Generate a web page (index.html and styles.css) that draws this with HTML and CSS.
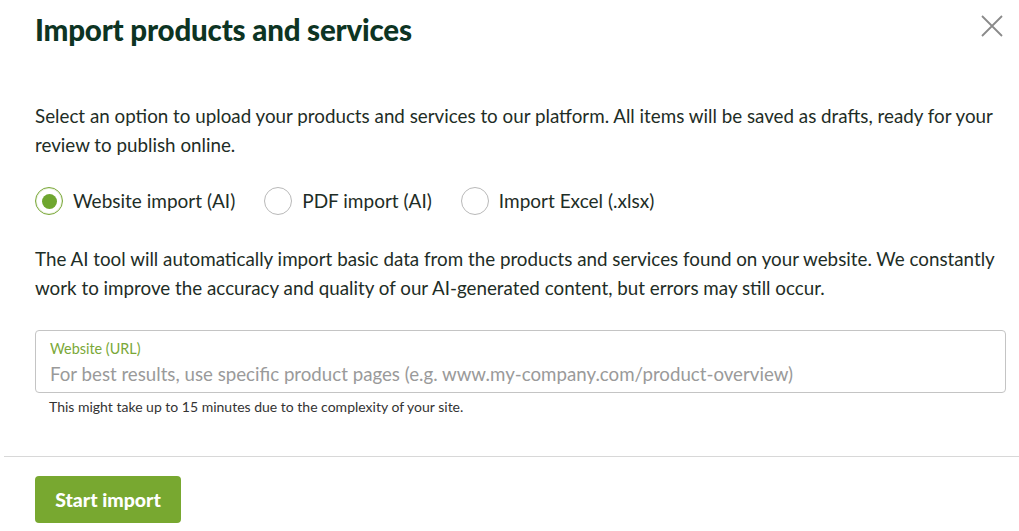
FILE: index.html
```html
<!DOCTYPE html>
<html>
<head>
<meta charset="utf-8">
<link rel="stylesheet" href="styles.css">
</head>
<body>
<div class="modal">
  <header class="modal-head">
    <h1 class="title">Import products and services</h1>
    <button class="close" aria-label="Close">
      <svg width="24" height="24" viewBox="0 0 24 24"><path d="M2 2L22 22M22 2L2 22" stroke="#8a8a8a" stroke-width="1.8" fill="none"/></svg>
    </button>
  </header>
  <div class="modal-body">
    <p class="text">Select an option to upload your products and services to our platform. All items will be saved as drafts, ready for your review to publish online.</p>
    <div class="radios">
      <label class="radio"><span class="dot checked"></span>Website import (AI)</label>
      <label class="radio"><span class="dot"></span>PDF import (AI)</label>
      <label class="radio"><span class="dot"></span>Import Excel (.xlsx)</label>
    </div>
    <p class="text">The AI tool will automatically import basic data from the products and services found on your website. We constantly work to improve the accuracy and quality of our AI-generated content, but errors may still occur.</p>
    <div class="field">
      <div class="field-label">Website (URL)</div>
      <div class="field-input">For best results, use specific product pages (e.g. www.my-company.com/product-overview)</div>
    </div>
    <div class="hint">This might take up to 15 minutes due to the complexity of your site.</div>
  </div>
  <footer class="modal-foot">
    <button class="btn">Start import</button>
  </footer>
</div>
</body>
</html>
```
FILE: styles.css
```css
html, body { margin: 0; padding: 0; background: #fff; }
body { font-family: Lato, "Open Sans", sans-serif; color: #1e2d26; }
.modal { width: 1019px; }
.modal-head { display: flex; justify-content: space-between; align-items: flex-start; padding: 12px 15px 0 35px; }
.title { margin: 0; font-size: 29.5px; font-weight: 900; color: #0d3423; line-height: 36px; letter-spacing: -0.2px; }
.close { border: 0; background: none; padding: 0; margin-top: 2px; width: 24px; height: 24px; cursor: pointer; }
.modal-body { padding: 53px 13px 0 35px; }
.text { margin: 0; font-size: 18.8px; line-height: 29px; }
.radios { display: flex; gap: 29px; margin: 28px 0 29px; align-items: center; }
.radio { display: flex; align-items: center; gap: 10px; font-size: 19px; line-height: 28px; }
.dot { width: 28px; height: 28px; border: 1px solid #b9b9b9; border-radius: 50%; box-sizing: border-box; position: relative; }
.dot.checked { border-color: #7aa838; box-shadow: inset 0 0 0 1px #e8f0dc; }
.dot.checked::after { content: ""; position: absolute; left: 5.5px; top: 5.5px; width: 15px; height: 15px; border-radius: 50%; background: #6ea62f; }
.field { margin-top: 28px; border: 1px solid #c4c4c4; border-radius: 4px; padding: 9px 14px 8px; height: 63px; box-sizing: border-box; }
.field-label { font-size: 14.4px; color: #7aa838; line-height: 18px; }
.field-input { font-size: 18.7px; color: #9a9a9a; line-height: 28px; margin-top: 2px; }
.hint { font-size: 14px; color: #333; margin: 5px 0 0 14px; line-height: 18px; }
.modal-foot { border-top: 1px solid #d8d8d8; margin: 40px 0 0 4px; padding: 19px 0 0 31px; }
.btn { background: #78a830; color: #fff; border: 0; border-radius: 4px; font-family: Lato, sans-serif; font-weight: 900; font-size: 19.5px; width: 146px; height: 47px; padding: 0; }
```
